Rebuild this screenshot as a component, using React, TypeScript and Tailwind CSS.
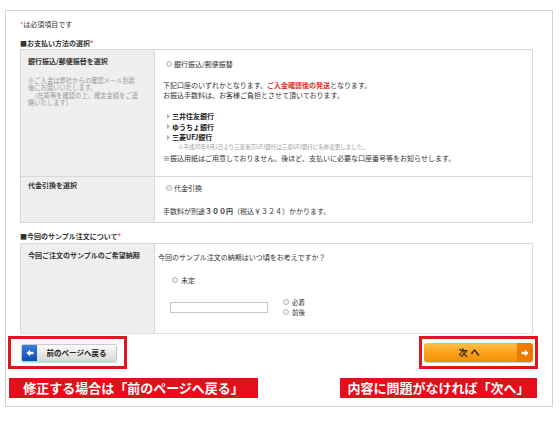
import React from 'react';

const Radio = () => (
  <span className="inline-block w-[6px] h-[6px] rounded-full border border-[#b8b8b8] bg-[#f2f2f2] shrink-0"></span>
);

const Bullet = () => (
  <svg width="3" height="5" viewBox="0 0 3 5" className="shrink-0">
    <path d="M0 0 L3 2.5 L0 5 Z" fill="#b0b0b0" />
  </svg>
);

const Arrow = ({ dir }: { dir: 'left' | 'right' }) => (
  <svg width="8" height="8" viewBox="0 0 8 8" className={dir === 'right' ? 'rotate-180' : ''}>
    <path d="M0.5 4 L4 0.8 L4 2.7 L7.5 2.7 L7.5 5.3 L4 5.3 L4 7.2 Z" fill="#fff" />
  </svg>
);

const Req = () => <span className="text-[#f04848]">*</span>;

export default function App() {
  return (
    <div className="w-[560px] h-[421px] bg-white pt-[10px] pl-[5px] overflow-hidden font-['Noto_Sans_CJK_JP',sans-serif] text-[#333]">
      <div className="w-[548px] h-[397px] border border-[#d2d2d2] flex flex-col">
        <div className="pl-[14px] pt-[8px]">
          <div className="h-[10px] leading-[10px] text-[7px]">
            <Req />は必須項目です
          </div>
          <div className="mt-[9px] h-[10px] leading-[10px] text-[7px] font-bold">
            ■お支払い方法の選択<Req />
          </div>

          {/* payment table */}
          <div className="mt-[1px] w-[513px] border border-[#d9d9d9] text-[7px]">
            <div className="grid grid-cols-[134px_1fr] h-[127px] border-b border-[#d9d9d9]">
              <div className="bg-[#efefef] border-r border-[#d9d9d9] px-[7px] pt-[6px]">
                <div className="font-bold leading-[10px]">銀行振込/郵便振替を選択</div>
                <div className="mt-[11px] font-['Liberation_Sans','Noto_Sans_CJK_JP',sans-serif] text-[6.3px] leading-[7.3px] text-[#9a9a9a]">
                  <div>※ご入金は弊社からの確認メール到着</div>
                  <div>後にお願いいたします。</div>
                  <div className="pl-[3px]">（在庫等を確認の上、確定金額をご連</div>
                  <div>絡いたします）</div>
                </div>
              </div>
              <div className="pl-[8px] pt-[9px]">
                <div className="flex items-center gap-[2px] pl-[3px] leading-[10px]">
                  <Radio />
                  <span>銀行振込/郵便振替</span>
                </div>
                <div className="mt-[11px] leading-[10px]">
                  下記口座のいずれかとなります。
                  <span className="text-[#e8302a] font-bold">ご入金確認後の発送</span>
                  となります。
                  <br />
                  お振込手数料は、お客様ご負担とさせて頂いております。
                </div>
                <div className="mt-[11px] pl-[4px] font-bold text-[#222]">
                  {['三井住友銀行', 'ゆうちょ銀行', '三菱UFJ銀行'].map((b) => (
                    <div key={b} className="flex items-center gap-[2px] leading-[10.5px]">
                      <Bullet />
                      <span>{b}</span>
                    </div>
                  ))}
                </div>
                <div className="mt-[1px] pl-[15px] text-[5.5px] leading-[7px] text-[#9a9a9a]">
                  ※平成30年4月1日より三菱東京UFJ銀行は三菱UFJ銀行に名称変更しました。
                </div>
                <div className="mt-[2px] leading-[10px]">
                  ※振込用紙はご用意しておりません。後ほど、支払いに必要な口座番号等をお知らせします。
                </div>
              </div>
            </div>
            <div className="grid grid-cols-[134px_1fr] h-[45px]">
              <div className="bg-[#efefef] border-r border-[#d9d9d9] px-[7px] pt-[3px]">
                <div className="font-bold leading-[10px]">代金引換を選択</div>
              </div>
              <div className="pl-[8px] pt-[6px]">
                <div className="flex items-center gap-[2px] pl-[3px] leading-[10px]">
                  <Radio />
                  <span>代金引換</span>
                </div>
                <div className="mt-[13px] leading-[10px]">
                  手数料が別途<span className="font-bold">３００円</span>（税込￥３２４）かかります。
                </div>
              </div>
            </div>
          </div>

          <div className="mt-[8px] h-[10px] leading-[10px] text-[7px] font-bold">
            ■今回のサンプル注文について<Req />
          </div>

          {/* sample table */}
          <div className="mt-[2px] w-[513px] h-[91px] border border-[#d9d9d9] border-b-[#e2e2e2] text-[7px] grid grid-cols-[134px_1fr]">
            <div className="bg-[#efefef] border-r border-[#d9d9d9] px-[7px] pt-[6px]">
              <div className="font-bold leading-[10px]">今回ご注文のサンプルのご希望納期</div>
            </div>
            <div className="pl-[3px] pt-[8px]">
              <div className="leading-[10px]">今回のサンプル注文の納期はいつ頃をお考えですか？</div>
              <div className="mt-[13px] pl-[14px] flex items-center gap-[3px] leading-[10px]">
                <Radio />
                <span>未定</span>
              </div>
              <div className="mt-[12px] pl-[12px] flex items-center gap-[15px]">
                <div className="w-[98px] h-[11px] border border-[#c8c8c8] bg-white"></div>
                <div className="flex flex-col text-[6.5px]">
                  <div className="flex items-center gap-[3px] leading-[10px]">
                    <Radio />
                    <span>必着</span>
                  </div>
                  <div className="flex items-center gap-[3px] leading-[10px]">
                    <Radio />
                    <span>前後</span>
                  </div>
                </div>
              </div>
            </div>
          </div>
        </div>

        {/* buttons */}
        <div className="mt-[2px] pl-[2px] pr-[14px] flex justify-between">
          <div className="w-[119px] h-[33px] border-[3px] border-[#e3141e] flex items-center justify-center">
            <div className="ml-[3px] w-[96px] h-[18px] flex rounded-[2px] overflow-hidden border border-[#c9c9c9] shadow-[0_1px_1px_rgba(0,0,0,0.15)]">
              <div className="w-[15px] h-full bg-gradient-to-b from-[#3d7be0] to-[#0f4bb5] flex items-center justify-center">
                <Arrow dir="left" />
              </div>
              <div className="flex-1 bg-gradient-to-b from-[#fbfbfb] to-[#d8d8d8] flex items-center justify-center text-[7.5px] font-bold text-[#222]">
                前のページへ戻る
              </div>
            </div>
          </div>
          <div className="w-[119px] h-[33px] border-[3px] border-[#e3141e] flex items-center justify-center">
            <div className="w-[109px] h-[19px] flex rounded-[3px] overflow-hidden shadow-[0_1px_1px_rgba(0,0,0,0.2)]">
              <div className="flex-1 bg-gradient-to-b from-[#ffc247] via-[#fba21c] to-[#f08f00] flex items-center justify-center text-[9px] font-bold text-[#1a1a1a] tracking-[3px]">
                次へ
              </div>
              <div className="w-[16px] h-full bg-[#ee7a00] flex items-center justify-center">
                <Arrow dir="right" />
              </div>
            </div>
          </div>
        </div>

        <div className="mt-[9px] pl-[3px] pr-[15px] flex justify-between">
          <div className="w-[249px] h-[20px] bg-[#e50f1b] text-white font-bold text-[13px] leading-[20px] text-center">
            修正する場合は「前のページへ戻る」
          </div>
          <div className="w-[197px] h-[20px] bg-[#e50f1b] text-white font-bold text-[13px] leading-[20px] text-center">
            内容に問題がなければ「次へ」
          </div>
        </div>
      </div>
    </div>
  );
}
